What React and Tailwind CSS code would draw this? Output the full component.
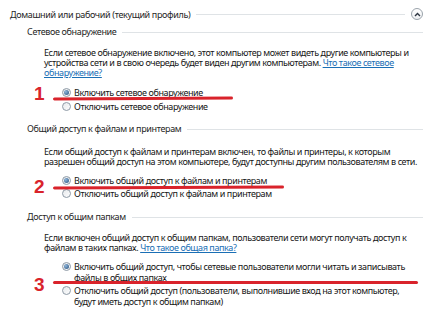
import React from 'react';

const FONT = { fontFamily: '"Noto Sans", "Open Sans", Arial, sans-serif' };
const RED_FONT = { fontFamily: '"Liberation Sans", Arial, sans-serif' };

function Radio({ checked }) {
  return (
    <span className="relative mt-[1px] flex h-[9px] w-[9px] shrink-0 items-center justify-center rounded-full border border-[#8e9aa6] bg-gradient-to-br from-[#e6e9ec] to-[#fdfdfd]">
      {checked && <span className="h-[5px] w-[5px] rounded-full bg-[radial-gradient(circle_at_35%_35%,#8fb6da,#254f7c)]" />}
    </span>
  );
}

function Option({ checked, children, className = '' }) {
  return (
    <div className={`flex items-start gap-[3px] pl-[62px] text-[9px] leading-[11px] tracking-[-0.4px] whitespace-nowrap text-[#161616] ${className}`}>
      <Radio checked={checked} />
      <span>{children}</span>
    </div>
  );
}

function Heading({ children, className = '' }) {
  return (
    <div className={`flex items-center pr-[16px] pl-[27px] text-[9px] leading-[10px] tracking-[-0.35px] whitespace-nowrap text-[#262626] ${className}`}>
      <span>{children}</span>
      <span className="ml-[6px] h-px flex-1 bg-[#dfe3e6]" />
    </div>
  );
}

function Para({ children, className = '' }) {
  return <p className={`pl-[44px] text-[9px] leading-[10px] tracking-[-0.4px] whitespace-nowrap text-[#161616] ${className}`}>{children}</p>;
}

function Mark({ n, top }) {
  return (
    <span className="absolute left-[34px] text-[19px] leading-[19px] font-bold text-[#d9232b]" style={{ ...RED_FONT, top }}>
      {n}
    </span>
  );
}

export default function App() {
  return (
    <div className="relative h-[320px] w-[439px] overflow-hidden bg-white" style={FONT}>
      {/* Profile header */}
      <div className="flex items-center pt-[8px] pr-[16px] pl-[10px] text-[9px] leading-[11px] tracking-[-0.35px] whitespace-nowrap text-[#262626]">
        <span>Домашний или рабочий (текущий профиль)</span>
        <span className="mx-[6px] h-px flex-1 bg-[#dfe3e6]" />
        <span className="flex h-[12px] w-[12px] items-center justify-center rounded-full border border-[#9aa3ab] bg-gradient-to-b from-white to-[#eef0f2]">
          <svg width="7" height="5" viewBox="0 0 7 5">
            <path d="M1 4 L3.5 1.5 L6 4" fill="none" stroke="#2d3540" strokeWidth="1.4" />
          </svg>
        </span>
      </div>

      <Heading className="mt-[7px]">Сетевое обнаружение</Heading>
      <Para className="mt-[11px]">
        Если сетевое обнаружение включено, этот компьютер может видеть другие компьютеры и
        <br />
        устройства сети и в свою очередь будет виден другим компьютерам.{' '}
        <span className="text-[#1a6fb5] underline">Что такое сетевое</span>
        <br />
        <span className="text-[#1a6fb5] underline">обнаружение?</span>
      </Para>
      <Option checked className="mt-[9px]">Включить сетевое обнаружение</Option>
      <Option className="mt-[3px]">Отключить сетевое обнаружение</Option>

      <Heading className="mt-[12px]">Общий доступ к файлам и принтерам</Heading>
      <Para className="mt-[13px]">
        Если общий доступ к файлам и принтерам включен, то файлы и принтеры, к которым
        <br />
        разрешен общий доступ на этом компьютере, будут доступны другим пользователям в сети.
      </Para>
      <Option checked className="mt-[8px]">Включить общий доступ к файлам и принтерам</Option>
      <Option className="mt-[2px]">Отключить общий доступ к файлам и принтерам</Option>

      <Heading className="mt-[13px]">Доступ к общим папкам</Heading>
      <Para className="mt-[11px]">
        Если включен общий доступ к общим папкам, пользователи сети могут получать доступ к
        <br />
        файлам в таких папках. <span className="text-[#1a6fb5] underline">Что такое общая папка?</span>
      </Para>
      <Option checked className="mt-[8px]">
        Включить общий доступ, чтобы сетевые пользователи могли читать и записывать
        <br />
        файлы в общих папках
      </Option>
      <Option className="mt-[2px]">
        Отключить общий доступ (пользователи, выполнившие вход на этот компьютер,
        <br />
        будут иметь доступ к общим папкам)
      </Option>

      {/* Red annotations over the screenshot */}
      <Mark n="1" top={84} />
      <span className="absolute top-[97px] left-[53px] h-[3px] w-[180px] rotate-[-0.3deg] rounded-full bg-[#d9232b]" />
      <Mark n="2" top={177} />
      <span className="absolute top-[186px] left-[53px] h-[3px] w-[231px] rotate-[-0.3deg] rounded-full bg-[#d9232b]" />
      <Mark n="3" top={275} />
      <span className="absolute top-[281px] left-[53px] h-[3px] w-[365px] rounded-full bg-[#d9232b]" />
    </div>
  );
}
